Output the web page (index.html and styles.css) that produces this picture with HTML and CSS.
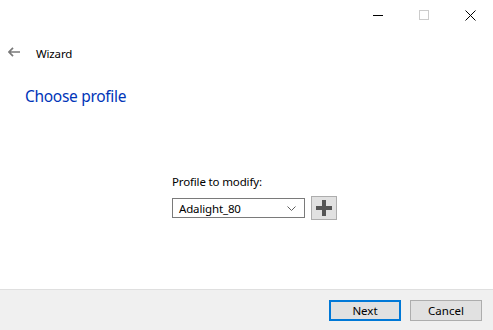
FILE: index.html
```html
<!DOCTYPE html>
<html lang="en">
<head>
    <meta charset="utf-8">
    <title>Wizard</title>
    <link rel="stylesheet" href="styles.css">
</head>
<body>
    <div class="window">
        <div class="titlebar">
            <span class="caption-btn">
                <svg width="10" height="10" viewBox="0 0 10 10"><path d="M0 5.5h10" stroke="#000" stroke-width="1"/></svg>
            </span>
            <span class="caption-btn">
                <svg width="10" height="10" viewBox="0 0 10 10"><rect x="0.5" y="0.5" width="9" height="9" fill="none" stroke="#ccc" stroke-width="1"/></svg>
            </span>
            <span class="caption-btn">
                <svg width="11" height="11" viewBox="0 0 11 11"><path d="M0.5 0.5l10 10M10.5 0.5l-10 10" stroke="#000" stroke-width="1"/></svg>
            </span>
        </div>
        <div class="nav">
            <span class="back">
                <svg width="12" height="10" viewBox="0 0 12 10"><path d="M5 0.8L1 5l4 4.2M1 5h11" fill="none" stroke="#7a7a7a" stroke-width="1.7"/></svg>
            </span>
            <span class="nav-title">Wizard</span>
        </div>
        <h1 class="heading">Choose profile</h1>
        <div class="content">
            <label class="field-label" for="profile">Profile to modify:</label>
            <div class="field-row">
                <div class="combo" id="profile">
                    <span>Adalight_80</span>
                    <svg width="9" height="5" viewBox="0 0 9 5"><path d="M0.5 0.5l4 4 4-4" fill="none" stroke="#606060" stroke-width="1"/></svg>
                </div>
                <button class="add-btn">
                    <svg width="16" height="16" viewBox="0 0 16 16"><path d="M6 0h4v6h6v4h-6v6h-4v-6h-6v-4h6z" fill="#555"/></svg>
                </button>
            </div>
        </div>
        <div class="footer">
            <button class="btn btn-default">Next</button>
            <button class="btn">Cancel</button>
        </div>
    </div>
</body>
</html>
```

FILE: styles.css
```css
:root {
    box-sizing: border-box;
}
:root * {
    box-sizing: inherit;
}
body {
    background-color: #FFF;
    color: #000;
    font-family: "Noto Sans", "Open Sans", sans-serif;
    font-size: 11.5px;
    letter-spacing: -0.15px;
    margin: 0;
}
.window {
    display: flex;
    flex-direction: column;
    height: 330px;
    width: 493px;
}
.titlebar {
    display: flex;
    height: 30px;
    justify-content: flex-end;
}
.caption-btn {
    align-items: center;
    display: flex;
    height: 30px;
    justify-content: center;
    width: 46px;
}
.nav {
    align-items: center;
    display: flex;
    height: 44px;
    padding: 0 0 0 8px;
}
.back {
    display: flex;
    margin: 0 16px 0 0;
}
.nav-title {
    line-height: 16px;
    margin: 3px 0 0;
}
.heading {
    color: #0035b8;
    font-size: 15.5px;
    font-weight: 400;
    letter-spacing: -0.3px;
    line-height: 20px;
    margin: 12px 0 0;
    padding: 0 0 0 25px;
}
.content {
    display: flex;
    flex: 1;
    flex-direction: column;
    padding: 68px 0 0 172px;
}
.field-label {
    line-height: 16px;
}
.field-row {
    align-items: center;
    display: flex;
    gap: 6px;
    margin: 6px 0 0;
}
.combo {
    align-items: center;
    background-color: #FFF;
    border: 1px solid #7a7a7a;
    display: flex;
    height: 20px;
    justify-content: space-between;
    padding: 0 8px 0 6px;
    width: 133px;
}
.add-btn {
    align-items: center;
    background-color: #e1e1e1;
    border: 1px solid #adadad;
    display: flex;
    height: 24px;
    justify-content: center;
    padding: 0;
    width: 26px;
}
.footer {
    align-items: center;
    background-color: #f0f0f0;
    border-top: 1px solid #dfdfdf;
    display: flex;
    gap: 9px;
    height: 41px;
    justify-content: flex-end;
    padding: 0 11px 0 0;
}
.btn {
    background-color: #e1e1e1;
    border: 1px solid #adadad;
    color: #000;
    font: inherit;
    height: 21px;
    line-height: 17px;
    padding: 0;
    width: 72px;
}
.btn-default {
    border: 2px solid #0078d7;
}
```
